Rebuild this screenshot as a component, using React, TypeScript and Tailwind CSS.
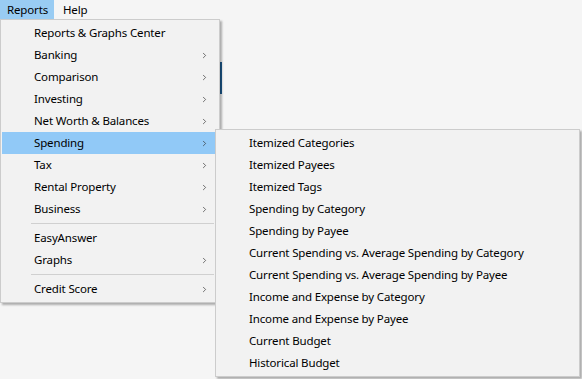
import { ChevronRight } from 'lucide-react';

type Item = { label: string; sub?: boolean; active?: boolean } | 'sep';

const reportItems: Item[] = [
  { label: 'Reports & Graphs Center' },
  { label: 'Banking', sub: true },
  { label: 'Comparison', sub: true },
  { label: 'Investing', sub: true },
  { label: 'Net Worth & Balances', sub: true },
  { label: 'Spending', sub: true, active: true },
  { label: 'Tax', sub: true },
  { label: 'Rental Property', sub: true },
  { label: 'Business', sub: true },
  'sep',
  { label: 'EasyAnswer' },
  { label: 'Graphs', sub: true },
  'sep',
  { label: 'Credit Score', sub: true },
];

const spendingItems = [
  'Itemized Categories',
  'Itemized Payees',
  'Itemized Tags',
  'Spending by Category',
  'Spending by Payee',
  'Current Spending vs. Average Spending by Category',
  'Current Spending vs. Average Spending by Payee',
  'Income and Expense by Category',
  'Income and Expense by Payee',
  'Current Budget',
  'Historical Budget',
];

function Row({ label, sub, active }: { label: string; sub?: boolean; active?: boolean }) {
  return (
    <div
      className={`flex items-center h-[22px] pl-[32px] pr-[9px] ${active ? 'bg-[#91c9f7]' : ''}`}
    >
      <span className="flex-1 whitespace-nowrap">{label}</span>
      {sub && <ChevronRight className="w-[9px] h-[9px] text-[#333]" strokeWidth={1.8} />}
    </div>
  );
}

export default function App() {
  return (
    <div
      className="relative w-[582px] h-[379px] bg-[#f5f5f5] text-[11.5px] tracking-[-0.15px] text-black overflow-hidden"
      style={{ fontFamily: '"Segoe UI", "Noto Sans", sans-serif' }}
    >
      {/* menu bar */}
      <div className="flex h-[19px] items-center">
        <div className="h-full w-[54px] pl-[7px] flex items-center bg-[#99ccf3]">Reports</div>
        <div className="h-full pl-[9px] flex items-center">Help</div>
      </div>

      {/* something from the window behind */}
      <div className="absolute left-[220px] top-[62px] w-[2px] h-[32px] bg-[#1c5a8e]" />

      {/* Reports dropdown */}
      <div className="absolute left-0 top-[19px] w-[220px] bg-[#f2f2f2] border border-[#cccccc] py-[2px] px-[1px] shadow-[2px_2px_2px_0_rgba(0,0,0,0.3)]">
        {reportItems.map((it, i) =>
          it === 'sep' ? (
            <div key={i} className="h-[7px] flex items-center pl-[29px] pr-[4px]">
              <div className="h-px w-full bg-[#d0d0d0]" />
            </div>
          ) : (
            <Row key={i} {...it} />
          )
        )}
      </div>

      {/* Spending submenu */}
      <div className="absolute left-[215px] top-[129px] w-[365px] bg-[#f2f2f2] border border-[#cccccc] py-[2px] px-[1px] shadow-[2px_2px_2px_0_rgba(0,0,0,0.3)]">
        {spendingItems.map((label) => (
          <div key={label} className="flex items-center h-[22px] pl-[32px] whitespace-nowrap">
            {label}
          </div>
        ))}
      </div>
    </div>
  );
}
